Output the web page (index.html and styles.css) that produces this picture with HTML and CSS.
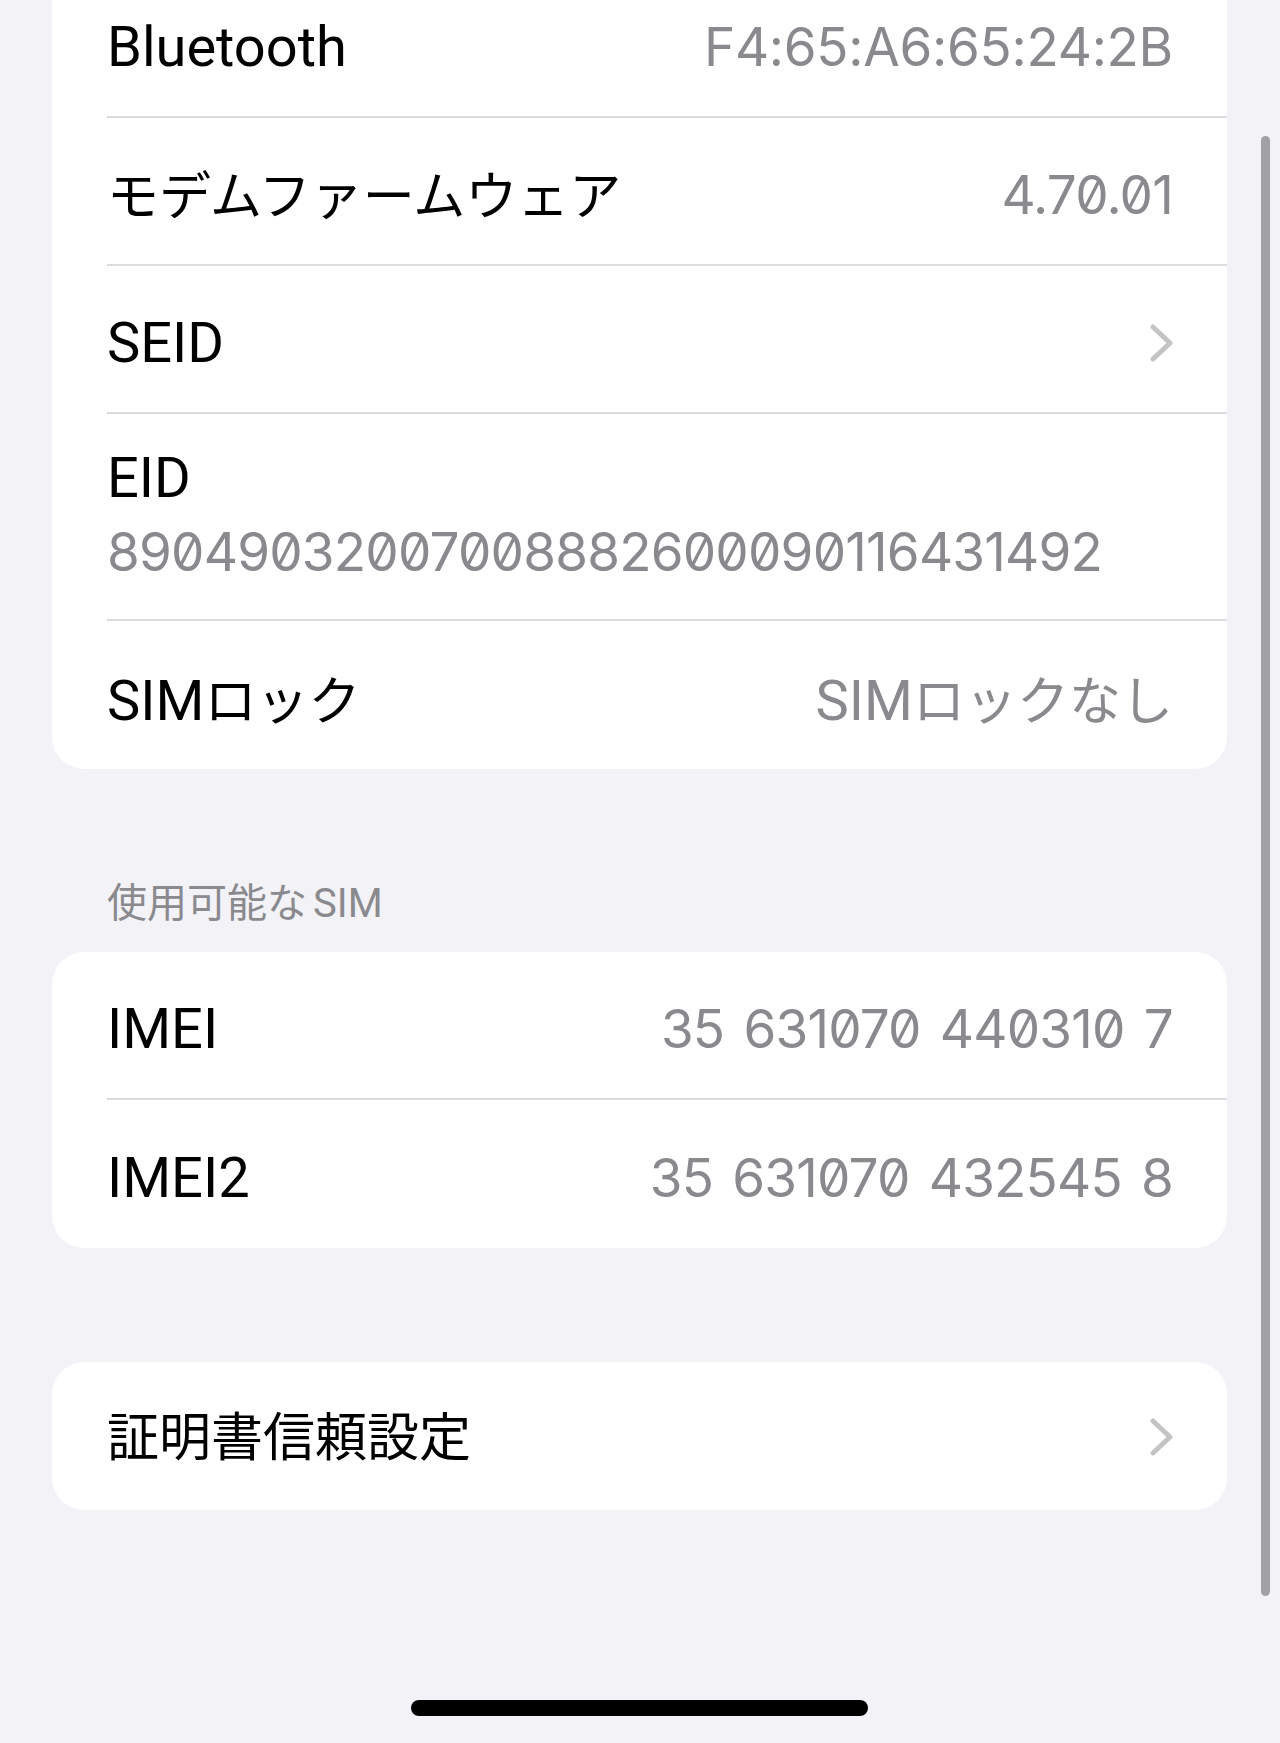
FILE: index.html
```html
<!DOCTYPE html>
<html lang="ja">
<head>
<meta charset="utf-8">
<title>情報</title>
<link rel="stylesheet" href="styles.css">
</head>
<body>
<div class="page">
  <section class="card card-first">
    <div class="row">
      <span class="label">Bluetooth</span>
      <span class="value value-mac">F4:65:A6:65:24:2B</span>
    </div>
    <div class="row">
      <span class="label ja">モデムファームウェア</span>
      <span class="value">4.70.01</span>
    </div>
    <div class="row">
      <span class="label">SEID</span>
      <svg class="chev" viewBox="0 0 26 40" width="26" height="40" aria-hidden="true"><polyline points="6,4 23,20 6,36"/></svg>
    </div>
    <div class="row row-stack">
      <span class="label">EID</span>
      <span class="value">89049032007008882600090116431492</span>
    </div>
    <div class="row">
      <span class="label">SIM<span class="ja">ロック</span></span>
      <span class="value-text">SIM<span class="ja">ロックなし</span></span>
    </div>
  </section>

  <h2 class="section-header">使用可能な<span class="lat">SIM</span></h2>

  <section class="card">
    <div class="row">
      <span class="label">IMEI</span>
      <span class="value value-imei">35 631070 440310 7</span>
    </div>
    <div class="row">
      <span class="label">IMEI2</span>
      <span class="value value-imei">35 631070 432545 8</span>
    </div>
  </section>

  <section class="card card-gap">
    <div class="row">
      <span class="label ja">証明書信頼設定</span>
      <svg class="chev" viewBox="0 0 26 40" width="26" height="40" aria-hidden="true"><polyline points="6,4 23,20 6,36"/></svg>
    </div>
  </section>

  <div class="home-indicator"></div>
</div>
<div class="scrollbar"></div>
</body>
</html>
```

FILE: styles.css
```css
html, body {
  margin: 0;
  padding: 0;
}

body {
  width: 1280px;
  height: 1743px;
  overflow: hidden;
  position: relative;
  background: #f2f2f7;
  font-family: "Roboto", "Noto Sans CJK JP", sans-serif;
  color: #000;
}

.page {
  padding: 0 53px 0 52px;
}

.card {
  background: #fff;
  border-radius: 32px;
  overflow: hidden;
}

.card-first {
  margin-top: -30px;
}

.card-gap {
  margin-top: 114px;
}

.card-gap .row {
  padding-top: 1px;
}

.row {
  display: flex;
  align-items: center;
  justify-content: space-between;
  box-sizing: border-box;
  height: 148px;
  margin-left: 55px;
  padding: 8px 54px 0 0;
  border-bottom: 2px solid #dcdcde;
}

.row:last-child {
  border-bottom: none;
}

.row-stack {
  flex-direction: column;
  align-items: flex-start;
  justify-content: flex-start;
  height: 207px;
  padding-top: 32px;
  gap: 12px;
}

.label {
  font-size: 56px;
  line-height: 64px;
  white-space: nowrap;
}

.ja {
  font-family: "Noto Sans CJK JP", sans-serif;
  font-size: 52px;
}

.label.ja {
  padding-bottom: 5px;
}

.value {
  font-family: "Inter", "Liberation Sans", sans-serif;
  font-size: 53px;
  line-height: 60px;
  letter-spacing: -0.8px;
  color: #8a8a8e;
  font-variant-numeric: slashed-zero;
  white-space: nowrap;
}

.value-mac {
  letter-spacing: -0.3px;
}

.value-imei {
  word-spacing: 5px;
}

.value-text {
  font-size: 56px;
  line-height: 64px;
  color: #8a8a8e;
  white-space: nowrap;
}

.chev {
  display: block;
  fill: none;
  stroke: #c4c4c7;
  stroke-width: 5;
  stroke-linecap: round;
  stroke-linejoin: round;
}

.section-header {
  margin: 0;
  padding: 112px 0 25px 55px;
  font-size: 40px;
  font-weight: normal;
  line-height: 46px;
  color: #8a8a8e;
}

.section-header .lat {
  margin-left: 6px;
}

.home-indicator {
  width: 457px;
  height: 16px;
  margin: 190px auto 0;
  border-radius: 8px;
  background: #000;
}

.scrollbar {
  position: absolute;
  left: 1261px;
  top: 136px;
  width: 9px;
  height: 1460px;
  border-radius: 5px;
  background: #a1a1a6;
}
```
